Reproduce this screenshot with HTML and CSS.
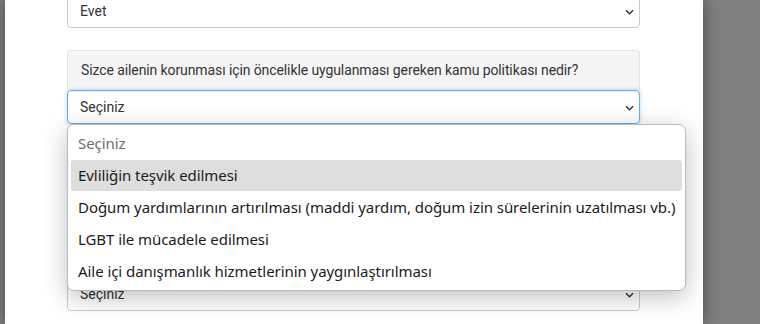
FILE: index.html
```html
<!DOCTYPE html>
<html lang="tr">
<head>
<meta charset="utf-8">
<link rel="stylesheet" href="styles.css">
</head>
<body>
<div class="backdrop">
  <div class="panel">
    <div class="form">
      <div class="select first">
        <span class="value">Evet</span>
        <svg class="chev" width="9" height="6" viewBox="0 0 9 6"><path d="M1 1.2l3.5 3.5 3.5-3.5" fill="none" stroke="#333" stroke-width="1.5"/></svg>
      </div>
      <div class="group">
        <div class="question">Sizce ailenin korunması için öncelikle uygulanması gereken kamu politikası nedir?</div>
        <div class="select focus">
          <span class="value">Seçiniz</span>
          <svg class="chev" width="9" height="6" viewBox="0 0 9 6"><path d="M1 1.2l3.5 3.5 3.5-3.5" fill="none" stroke="#333" stroke-width="1.5"/></svg>
        </div>
        <div class="popup">
          <div class="opt placeholder">Seçiniz</div>
          <div class="opt active">Evliliğin teşvik edilmesi</div>
          <div class="opt">Doğum yardımlarının artırılması (maddi yardım, doğum izin sürelerinin uzatılması vb.)</div>
          <div class="opt">LGBT ile mücadele edilmesi</div>
          <div class="opt">Aile içi danışmanlık hizmetlerinin yaygınlaştırılması</div>
        </div>
      </div>
      <div class="group">
        <div class="question"></div>
        <div class="select"></div>
      </div>
      <div class="group tight">
        <div class="question"></div>
        <div class="select">
          <span class="value">Seçiniz</span>
          <svg class="chev" width="9" height="6" viewBox="0 0 9 6"><path d="M1 1.2l3.5 3.5 3.5-3.5" fill="none" stroke="#333" stroke-width="1.5"/></svg>
        </div>
      </div>
    </div>
  </div>
</div>
</body>
</html>
```
FILE: styles.css
```css
html, body {
  margin: 0;
  padding: 0;
  height: 100%;
  overflow: hidden;
}
body {
  background: #808080;
  font-family: "Roboto", "DejaVu Sans", sans-serif;
  color: #333;
}
.backdrop {
  display: flex;
  height: 324px;
  padding-left: 5px;
  overflow: hidden;
}
.panel {
  width: 698px;
  height: 324px;
  background: #fff;
  box-shadow: 0 0 16px rgba(0, 0, 0, 0.45);
  flex: none;
  overflow: hidden;
}
.form {
  margin-left: 62px;
  width: 573px;
  display: flex;
  flex-direction: column;
}
.select {
  box-sizing: border-box;
  height: 34px;
  border: 1px solid #ccc;
  border-radius: 4px;
  background: #fff;
  display: flex;
  align-items: center;
  justify-content: space-between;
  padding: 0 5px 0 12px;
  font-size: 14px;
  box-shadow: inset 0 1px 1px rgba(0, 0, 0, 0.075);
}
.select.first {
  margin-top: -6px;
}
.select.focus {
  border-color: #66afe9;
  box-shadow: inset 0 1px 1px rgba(0, 0, 0, 0.075), 0 0 4px rgba(102, 175, 233, 0.5);
}
.chev {
  display: block;
  margin-left: auto;
  margin-top: 1px;
}
.group {
  margin-top: 22px;
  display: flex;
  flex-direction: column;
  position: relative;
}
.group.tight {
  margin-top: 17px;
}
.question {
  box-sizing: border-box;
  height: 40px;
  background: #f5f5f5;
  border: 1px solid #e3e3e3;
  border-bottom: none;
  border-radius: 4px 4px 0 0;
  padding: 9px 13px 0;
  font-size: 14px;
  line-height: 20px;
  letter-spacing: -0.1px;
  white-space: nowrap;
}
.popup {
  position: absolute;
  left: 0;
  top: 74px;
  width: 619px;
  box-sizing: border-box;
  background: #fff;
  border: 1px solid #b9b9b9;
  border-radius: 7px;
  padding: 3px 3px 2px;
  box-shadow: 0 6px 24px rgba(0, 0, 0, 0.25);
  z-index: 5;
  font-family: "Noto Sans", "Open Sans", sans-serif;
  font-size: 15px;
  letter-spacing: -0.06px;
  color: #1b1b1b;
}
.opt {
  height: 31px;
  margin-bottom: 1px;
  line-height: 31px;
  padding-left: 7px;
  border-radius: 3px;
  white-space: nowrap;
}
.opt.placeholder {
  color: #6d6d6d;
}
.opt.active {
  background: #dedede;
}
```
